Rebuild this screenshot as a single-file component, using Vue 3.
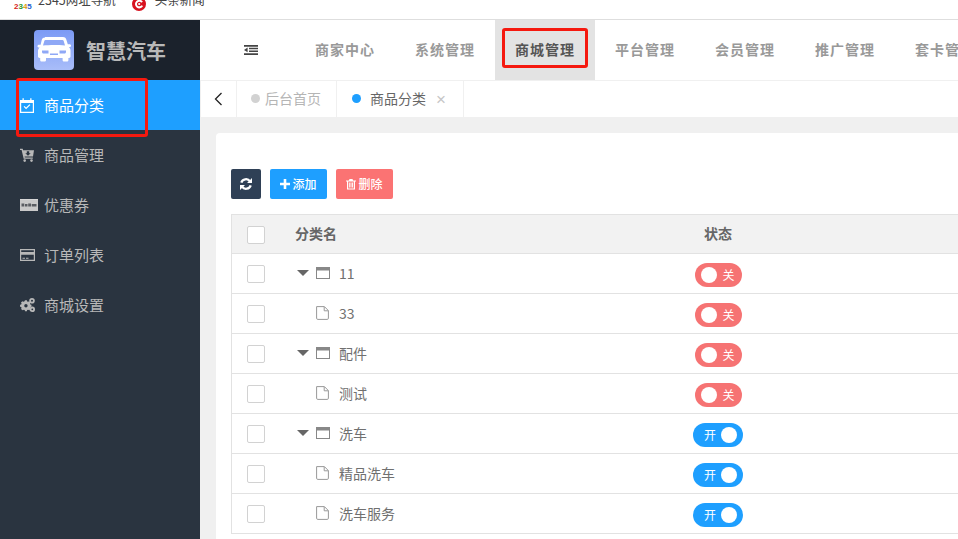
<script setup>
const navs = ['商家中心', '系统管理', '商城管理', '平台管理', '会员管理', '推广管理', '套卡管理']
const menu = [
  { label: '商品分类', icon: 'calendar', w: 14, h: 15, active: true },
  { label: '商品管理', icon: 'cart', w: 14, h: 14 },
  { label: '优惠券', icon: 'paypal', w: 18, h: 12 },
  { label: '订单列表', icon: 'card', w: 15, h: 12 },
  { label: '商城设置', icon: 'cogs', w: 15, h: 14 }
]
const rows = [
  { name: '11', parent: true, on: false },
  { name: '33', parent: false, on: false },
  { name: '配件', parent: true, on: false },
  { name: '测试', parent: false, on: false },
  { name: '洗车', parent: true, on: true },
  { name: '精品洗车', parent: false, on: true },
  { name: '洗车服务', parent: false, on: true }
]
</script>

<template>
  <div class="page">
    <div class="bookmarks">
      <span class="bm-logo"><i class="r">2</i><i class="g">3</i><i class="y">4</i><i class="b">5</i></span>
      <span class="bm-text first">2345网址导航</span>
      <svg class="bm-icon" viewBox="0 0 14 14" width="14" height="14"><circle cx="7" cy="7" r="7" fill="#d8121f"/><path d="M10 5.200A3.300 3.300 0 1 0 10.200 8.600" fill="none" stroke="#fff" stroke-width="2"/><circle cx="7.200" cy="7" r="1.100" fill="#fff"/></svg>
      <span class="bm-text">头条新闻</span>
    </div>

    <div class="body">
      <aside class="side">
        <div class="brand">
          <svg class="logo" viewBox="0 0 40 40" width="40" height="40">
            <defs><linearGradient id="lg" x1="0" y1="0" x2="0" y2="1"><stop offset="0" stop-color="#7b9af5"/><stop offset="1" stop-color="#a9bdf9"/></linearGradient></defs>
            <rect width="40" height="40" rx="4" fill="url(#lg)"/>
            <g transform="translate(0 -2.500)">
              <path fill="#fff" d="M11 9.500h18c1.600 0 2.700.9 3.200 2.300l1.600 5h1.700c.8 0 1.500.6 1.500 1.400s-.7 1.300-1.500 1.300h-.6c1 1 1.600 2.200 1.600 3.600V29c0 .8-.6 1.400-1.400 1.400h-.7v2c0 .9-.7 1.600-1.600 1.600h-2.600c-.9 0-1.600-.7-1.600-1.600v-2H12v2c0 .9-.7 1.600-1.600 1.600H7.800c-.9 0-1.600-.7-1.600-1.600v-2h-.7C4.700 30.400 4 29.800 4 29v-5.400c0-1.400.6-2.600 1.600-3.600H5c-.8 0-1.500-.5-1.500-1.300s.7-1.400 1.500-1.400h1.600l1.200-5c.5-1.400 1.600-2.300 3.200-2.300z"/>
              <path fill="#8fa8f6" d="M11.500 12.500h17c.6 0 1 .3 1.200.9l1.300 4.600c-6.500-.7-15.500-.7-22 0l1.300-4.600c.2-.6.6-.9 1.200-.9zM8 23h6.500v3H9.500C8.600 26 8 25.400 8 24.500zM32 23h-6.500v3h5c.9 0 1.500-.6 1.500-1.500zM16 26h8v1.500h-8z"/>
            </g>
          </svg>
          <span class="brand-name">智慧汽车</span>
        </div>
        <nav class="menu">
          <a v-for="m in menu" :key="m.label" class="menu-item" :class="{ active: m.active }">
            <span class="icon-box">
              <svg :viewBox="`0 0 ${m.w} ${m.h}`" :width="m.w" :height="m.h" fill="currentColor">
                <template v-if="m.icon === 'calendar'">
                  <path fill-rule="evenodd" d="M0 2h2.500V.2h1.300V2h6.400V.2h1.300V2H14v13H0zM1.200 5v8.800h11.600V5z"/>
                  <path d="M3.600 8.800l.9-.9 1.600 1.600 3.400-3.300.9.900-4.300 4.200z"/>
                </template>
                <template v-else-if="m.icon === 'cart'">
                  <path d="M0 .8h2.700l.4 1.400H14l-1 6.300H4.600l.2 1h8v1.300H3.700L1.600 2.100H0zM6.800 3.200v2H5.300l2.700 2.500 2.700-2.500H9.200v-2z"/>
                  <circle cx="4.700" cy="12.600" r="1.300"/><circle cx="11.500" cy="12.600" r="1.300"/>
                </template>
                <template v-else-if="m.icon === 'paypal'">
                  <path fill="#c9c9c9" d="M0 0h18v12H0z"/>
                  <path fill="#5a5d62" d="M1.500 4.500h2.800v3H1.500zM5 5h2.500v2.500H5zM8.200 4.500H11v3H8.200zM11.700 5h4.800v2.500h-4.800z"/>
                  <path fill="#fff" d="M0 0h18v1H0z" opacity=".25"/>
                </template>
                <template v-else-if="m.icon === 'card'">
                  <path fill-rule="evenodd" d="M0 0h15v12H0zM1.200 1.200v1.700h12.600V1.200zM1.200 5.800v5h12.600v-5z"/>
                  <path d="M2.500 8.800h2.500v.9H2.500zM6 8.800h2.500v.9H6z"/>
                </template>
                <template v-else>
                  <path fill-rule="evenodd" d="M4.200 3.200h2l.3 1.200 1 .4 1.100-.6 1.400 1.400-.6 1.100.4 1 1.200.3v2l-1.200.3-.4 1 .6 1.100-1.400 1.400-1.100-.6-1 .4-.3 1.200h-2l-.3-1.200-1-.4-1.100.6L0 12.400l.6-1.100-.4-1L-1 10V8l1.200-.3.4-1-.6-1.100L1.400 4.200l1.100.6 1-.4zM5.200 7.200a1.800 1.800 0 1 0 0 3.600 1.800 1.800 0 0 0 0-3.600z" transform="translate(1 -.8) scale(.95)"/>
                  <path fill-rule="evenodd" d="M12 0a2.800 2.800 0 1 1 0 5.600A2.800 2.800 0 0 1 12 0zM12 1.800a1 1 0 1 0 0 2 1 1 0 0 0 0-2zM12.300 8.600a2.700 2.700 0 1 1 0 5.400 2.700 2.700 0 0 1 0-5.400zM12.300 10.400a.9.9 0 1 0 0 1.800.9.9 0 0 0 0-1.800z"/>
                </template>
              </svg>
            </span>
            <span class="menu-label">{{ m.label }}</span>
          </a>
        </nav>
      </aside>

      <main class="main">
        <header class="topnav">
          <div class="toggle">
            <svg viewBox="0 0 14 10" width="14" height="10" fill="#444"><path d="M0 0h14v1.700H0zM5 2.800h9v1.500H5zM5 5.600h9v1.500H5zM0 8.300h14V10H0zM3.600 2.600v4.700L0 5z"/></svg>
          </div>
          <a v-for="n in navs" :key="n" class="nav-item" :class="{ current: n === '商城管理' }">{{ n }}</a>
        </header>

        <div class="tabs">
          <div class="back">
            <svg viewBox="0 0 9 14" width="9" height="14"><path d="M7.500 1L1.500 7l6 6" fill="none" stroke="#222" stroke-width="1.300"/></svg>
          </div>
          <div class="tab home"><i class="dot grey"></i>后台首页</div>
          <div class="tab now"><i class="dot blue"></i>商品分类<span class="close">×</span></div>
        </div>

        <div class="content">
          <section class="card">
            <div class="tools">
              <button class="btn dark" aria-label="刷新">
                <svg viewBox="0 0 14 14" width="14" height="14"><path d="M2.300 5.700A4.900 4.900 0 0 1 11 4.300M11.700 8.300A4.900 4.900 0 0 1 3 9.700" fill="none" stroke="#fff" stroke-width="2.300"/><path fill="#fff" d="M13 1v5H8zM1 13V8h5z"/></svg>
              </button>
              <button class="btn blue">
                <svg viewBox="0 0 10 10" width="10" height="10" fill="#fff"><path d="M3.700 0h2.600v3.700H10v2.600H6.300V10H3.700V6.300H0V3.700h3.700z"/></svg><span class="btn-text">添加</span>
              </button>
              <button class="btn red">
                <svg viewBox="0 0 10 11" width="10" height="11" fill="#fff"><path fill-rule="evenodd" d="M3.500 0h3l.6 1.400H10v1H9v8.100H1V2.400H0v-1h2.900zM2.200 2.400v7h5.600v-7zM3.200 3.500h.9v5h-.9zM4.600 3.500h.9v5h-.9zM6 3.500h.9v5H6z"/></svg><span class="btn-text">删除</span>
              </button>
            </div>

            <div class="table">
              <div class="row head">
                <div class="c-check"><span class="check"></span></div>
                <div class="c-name">分类名</div>
                <div class="c-status head-status">状态</div>
              </div>
              <div v-for="r in rows" :key="r.name" class="row">
                <div class="c-check"><span class="check"></span></div>
                <div class="c-name tree">
                  <template v-if="r.parent">
                    <i class="caret"></i>
                    <svg class="ico" viewBox="0 0 14 12" width="14" height="12"><path fill="#888" fill-rule="evenodd" d="M0 0h14v12H0zM1 3.500V11h12V3.500z"/></svg>
                  </template>
                  <svg v-else class="ico file" viewBox="0 0 13 14" width="13" height="14"><path d="M.6.6h7.800l4 4v7.600a1.200 1.200 0 0 1-1.200 1.200H1.800A1.200 1.200 0 0 1 .6 12.200zM8.200.8v4h4" fill="#fff" stroke="#999" stroke-width="1"/></svg>
                  <span class="name">{{ r.name }}</span>
                </div>
                <div class="c-status switch-cell">
                  <span class="switch" :class="r.on ? 'on' : 'off'">
                    <template v-if="r.on"><span class="sw-text">开</span><i class="knob"></i></template>
                    <template v-else><i class="knob"></i><span class="sw-text">关</span></template>
                  </span>
                </div>
              </div>
            </div>
          </section>
        </div>
      </main>
    </div>

    <div class="mark mark-side"></div>
    <div class="mark mark-nav"></div>
  </div>
</template>

<style>
html, body { margin: 0; padding: 0; overflow: hidden; background: #fff; }
</style>

<style scoped>
.page {
  position: relative;
  width: 958px;
  height: 539px;
  overflow: hidden;
  background: #fff;
  font-family: "Noto Sans CJK SC", "Liberation Sans", sans-serif;
  color: #555;
}
i { font-style: normal; }

.bookmarks {
  box-sizing: border-box;
  height: 20px;
  border-bottom: 1px solid #dedede;
  display: flex;
  align-items: flex-end;
  padding: 0 0 12px 14px;
  overflow: hidden;
  white-space: nowrap;
  line-height: 14px;
  color: #444;
}
.bm-logo {
  display: flex;
  width: 16px;
  justify-content: space-between;
  font: 700 8px/8px "Liberation Sans", sans-serif;
  margin-bottom: -4px;
  flex: none;
}
.bm-logo .r { color: #d62020; }
.bm-logo .g { color: #2c9a2c; }
.bm-logo .y { color: #d8a010; }
.bm-logo .b { color: #1f5fd0; }
.bm-text { font-size: 12.500px; }
.bm-text.first { margin-left: 8px; }
.bm-icon { margin: 0 9px 0 16px; position: relative; top: 4px; flex: none; }

.body { display: flex; height: 519px; }

.side { width: 200px; flex: none; background: #2a3440; }
.brand {
  height: 60px;
  background: #1b222c;
  display: flex;
  align-items: center;
  padding-left: 34px;
  box-sizing: border-box;
}
.logo { flex: none; }
.brand-name {
  margin-left: 12px;
  font-size: 20px;
  font-weight: 700;
  color: #b9b9b9;
}
.menu-item {
  height: 50px;
  display: flex;
  align-items: center;
  padding-left: 20px;
  color: #b8b8b8;
  font-size: 15px;
}
.menu-item.active { background: #1e9fff; color: #fff; }
.icon-box { width: 24px; flex: none; display: flex; align-items: center; }
.menu-label { padding-bottom: 2px; }

.main { flex: 1; min-width: 0; display: flex; flex-direction: column; }

.topnav { height: 60px; flex: none; display: flex; align-items: stretch; background: #fff; overflow: hidden; }
.toggle { width: 95px; flex: none; display: flex; align-items: center; padding-left: 44px; box-sizing: border-box; }
.nav-item {
  width: 100px;
  flex: none;
  text-align: center;
  line-height: 58px;
  height: 60px;
  font-size: 14px;
  letter-spacing: 1px;
  font-weight: 700;
  color: #999;
}
.nav-item.current { background: #e3e3e3; color: #555; }

.tabs {
  box-sizing: border-box;
  height: 37px;
  flex: none;
  display: flex;
  background: #fff;
  border-top: 1px solid #f0f0f0;
  font-size: 14px;
}
.back { width: 37px; display: flex; align-items: center; justify-content: center; border-left: 1px solid #f0f0f0; border-right: 1px solid #f0f0f0; box-sizing: border-box; }
.tab { display: flex; align-items: center; box-sizing: border-box; border-right: 1px solid #f0f0f0; padding-bottom: 3px; }
.home { width: 100px; padding-left: 14px; color: #b5b5b5; }
.now { width: 127px; padding-left: 15px; color: #666; }
.dot { width: 9px; height: 9px; border-radius: 50%; margin-right: 5px; flex: none; position: relative; top: 1px; }
.dot.grey { background: #d2d2d2; }
.dot.blue { background: #1e9fff; margin-right: 9px; }
.close { margin-left: 10px; color: #c6c6c6; font: 17px "Liberation Sans", sans-serif; position: relative; top: 2px; }

.content { flex: 1; background: #f0f0f0; padding: 16px 0 0 16px; min-height: 0; }
.card { width: 900px; height: 500px; background: #fff; border-radius: 4px; padding: 36px 0 0 15px; box-sizing: border-box; }

.tools { display: flex; gap: 9px; }
.btn {
  height: 30px;
  width: 57px;
  border: 0;
  border-radius: 2px;
  padding: 0;
  color: #fff;
  font-family: inherit;
  font-size: 12px;
  font-weight: 500;
  display: flex;
  align-items: center;
  justify-content: center;
  gap: 2px;
}
.btn-text { padding-bottom: 2px; }
.btn.dark { width: 30px; background: #2f4056; }
.btn.blue { background: #1e9fff; }
.btn.red { background: #fb7373; }

.table {
  margin-top: 15px;
  width: 860px;
  border-left: 1px solid #e2e2e2;
  border-top: 1px solid #e2e2e2;
  font-size: 14px;
}
.row {
  box-sizing: border-box;
  height: 40px;
  display: grid;
  grid-template-columns: 48px 360px 156px 1fr;
  align-items: center;
  border-bottom: 1px solid #e2e2e2;
  color: #707070;
}
.head { height: 39px; background: #f2f2f2; font-weight: 700; color: #666; }
.c-check { display: flex; justify-content: center; padding-top: 1px; }
.check { width: 18px; height: 18px; box-sizing: border-box; border: 1px solid #d2d2d2; border-radius: 2px; background: #fff; }
.c-name { padding-left: 15px; padding-bottom: 3px; }
.tree { display: flex; align-items: center; position: relative; height: 100%; padding: 0 0 2px; box-sizing: border-box; }
.caret { position: absolute; left: 17px; top: 16px; width: 0; height: 0; border-left: 6px solid transparent; border-right: 6px solid transparent; border-top: 6px solid #666; }
.ico { position: absolute; left: 36px; top: 13px; }
.ico.file { left: 36px; top: 12px; }
.name { margin-left: 59px; }
.c-status { display: flex; justify-content: center; }
.head-status { padding-bottom: 3px; }
.switch-cell { padding-top: 3px; }

.switch {
  height: 24px;
  border-radius: 12px;
  color: #fff;
  font-size: 12px;
  display: flex;
  align-items: center;
  box-sizing: border-box;
}
.sw-text { padding-bottom: 1px; }
.switch.off { width: 47px; background: #f67373; padding-left: 6px; gap: 6px; }
.switch.on { width: 50px; background: #1e9fff; padding-left: 11px; gap: 5px; }
.knob { width: 16px; height: 16px; border-radius: 50%; background: #fff; flex: none; }

.mark { position: absolute; box-sizing: border-box; border: 3px solid #f5190f; border-radius: 3px; pointer-events: none; }
.mark-side { left: 16px; top: 78px; width: 132px; height: 59px; }
.mark-nav { left: 502px; top: 28px; width: 86px; height: 40px; }
</style>
